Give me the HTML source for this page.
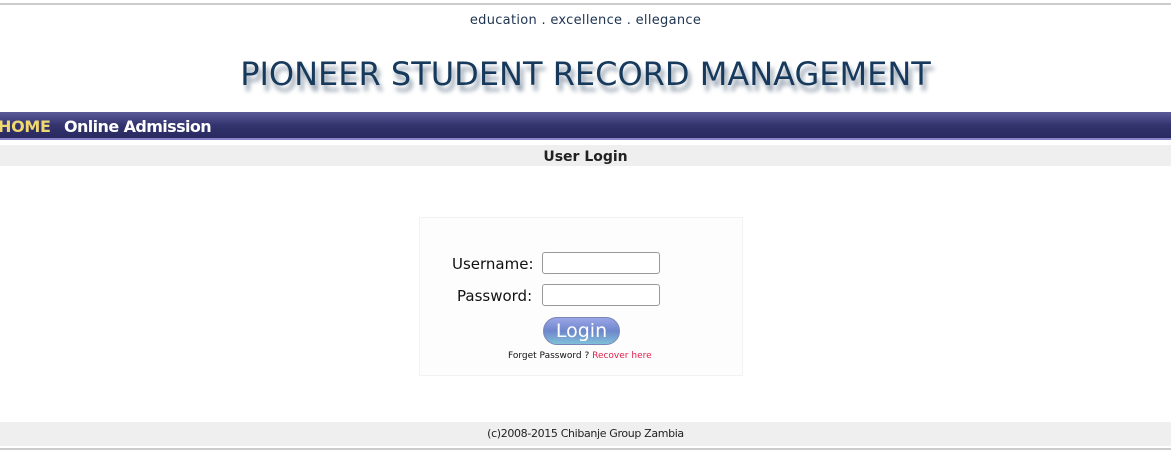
<!DOCTYPE html>
<html><head><style>
body{margin:0;width:1171px;height:453px;background:#fff;font-family:"DejaVu Sans","Liberation Sans",sans-serif;position:relative;overflow:hidden}
.a{position:absolute}
</style></head><body>
<div class="a" style="left:0;top:3px;width:1171px;height:2px;background:#ccc"></div>
<div class="a" style="left:0;top:13px;width:1171px;text-align:center;font-size:13px;color:#1d3350;letter-spacing:0.3px;font-weight:500">education . excellence . ellegance</div>
<div class="a" style="left:0;top:55px;width:1171px;text-align:center;font-size:32px;color:#173a5c;text-shadow:3px 6px 5px #8a98a8">PIONEER STUDENT RECORD MANAGEMENT</div>
<div class="a" style="left:0;top:112px;width:1171px;height:26px;background:linear-gradient(#5a5a9a,#33336e 50%,#2a2a60);border-bottom:2px solid #8a86cc"></div>
<div class="a" style="left:-2px;top:117px;font-size:16px;font-weight:bold;color:#f0d870;letter-spacing:-0.3px">HOME</div>
<div class="a" style="left:64px;top:117px;font-size:16px;font-weight:bold;color:#fff;letter-spacing:-0.6px">Online Admission</div>
<div class="a" style="left:0;top:145px;width:1171px;height:21px;background:#efefef;text-align:center;font-size:14px;font-weight:bold;color:#222;line-height:24px">User Login</div>
<div class="a" style="left:419px;top:217px;width:322px;height:157px;border:1px solid #f2f2f2;background:#fdfdfd"></div>
<div class="a" style="left:452px;top:255px;font-size:15px;color:#111">Username:</div>
<div class="a" style="left:457px;top:287px;font-size:15px;color:#111">Password:</div>
<div class="a" style="left:542px;top:252px;width:116px;height:20px;border:1px solid #999;border-radius:3px;background:#fff"></div>
<div class="a" style="left:542px;top:284px;width:116px;height:20px;border:1px solid #999;border-radius:3px;background:#fff"></div>
<div class="a" style="left:543px;top:317px;width:77px;height:28px;border-radius:14px;background:linear-gradient(#9aa6e6,#6e86cc 50%,#80c0d8);border:1px solid #7a86b8;color:#fff;font-size:19px;text-align:center;line-height:27px;box-sizing:border-box">Login</div>
<div class="a" style="left:508px;top:351px;font-size:9px;color:#111">Forget Password ? <span style="color:#e0204a">Recover here</span></div>
<div class="a" style="left:0;top:422px;width:1171px;height:24px;background:#efefef;text-align:center;font-size:11px;color:#222;line-height:24px;letter-spacing:-0.35px">(c)2008-2015 Chibanje Group Zambia</div>
<div class="a" style="left:0;top:448px;width:1171px;height:2px;background:#ccc"></div>
</body></html>
